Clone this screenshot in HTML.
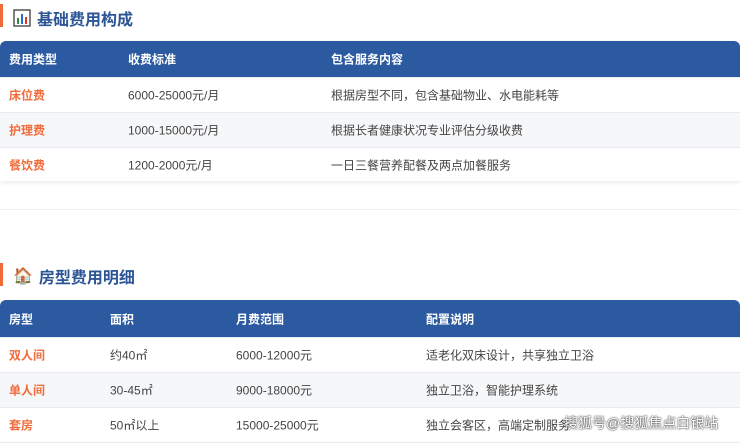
<!DOCTYPE html><html><head><meta charset="utf-8"><style>
*{margin:0;padding:0;box-sizing:border-box}
body{width:740px;height:438px;overflow:hidden;background:#fff;font-family:"Liberation Sans","Noto Sans CJK SC",sans-serif;position:relative}
.bar{position:absolute;left:0;width:3px;background:#f26b3a}
.title{position:absolute;left:13px;font-size:16px;font-weight:bold;color:#2c5596;display:flex;align-items:center;gap:6px}
.tbl{position:absolute;left:0;width:740px;border-radius:6px 6px 0 0;overflow:hidden;box-shadow:0 2px 4px rgba(0,0,0,0.08)}
.row{position:relative;height:35px;font-size:12px;color:#444;border-bottom:1px solid #e8ebf0}
.row span{position:absolute;top:50%;transform:translateY(-50%);white-space:nowrap}
.hd{background:#2c5aa0;color:#fff;font-weight:bold;height:37px}
.alt{background:#f6f7f9}
.o{color:#f26b3a;font-weight:bold}
</style></head><body>
<div class="bar" style="top:4px;height:23px"></div>
<div class="title" style="top:6px"><svg width="18" height="18" viewBox="0 0 18 18"><rect x="1" y="1" width="16" height="16" fill="#fff" stroke="#555" stroke-width="1.5"/><rect x="4" y="9" width="2" height="6" fill="#2b8a3e"/><rect x="8" y="5" width="2" height="10" fill="#1c6fd1"/><rect x="12" y="8" width="2" height="7" fill="#e03131"/></svg>基础费用构成</div>
<div class="tbl" style="top:41px">
<div class="row hd"><span style="left:9px">费用类型</span><span style="left:128px">收费标准</span><span style="left:331px">包含服务内容</span></div>
<div class="row"><span class="o" style="left:9px">床位费</span><span style="left:128px">6000-25000元/月</span><span style="left:331px">根据房型不同，包含基础物业、水电能耗等</span></div>
<div class="row alt"><span class="o" style="left:9px">护理费</span><span style="left:128px">1000-15000元/月</span><span style="left:331px">根据长者健康状况专业评估分级收费</span></div>
<div class="row" style="height:33px;border:none"><span class="o" style="left:9px">餐饮费</span><span style="left:128px">1200-2000元/月</span><span style="left:331px">一日三餐营养配餐及两点加餐服务</span></div>
</div>
<div style="position:absolute;top:209px;left:0;width:740px;height:1px;background:#f0f1f3"></div>
<div class="bar" style="top:263px;height:23px"></div>
<div class="title" style="top:264px"><span>🏠</span>房型费用明细</div>
<div class="tbl" style="top:300px">
<div class="row hd" style="height:38px"><span style="left:9px">房型</span><span style="left:110px">面积</span><span style="left:236px">月费范围</span><span style="left:426px">配置说明</span></div>
<div class="row"><span class="o" style="left:9px">双人间</span><span style="left:110px">约40㎡</span><span style="left:236px">6000-12000元</span><span style="left:426px">适老化双床设计，共享独立卫浴</span></div>
<div class="row alt"><span class="o" style="left:9px">单人间</span><span style="left:110px">30-45㎡</span><span style="left:236px">9000-18000元</span><span style="left:426px">独立卫浴，智能护理系统</span></div>
<div class="row"><span class="o" style="left:9px">套房</span><span style="left:110px">50㎡以上</span><span style="left:236px">15000-25000元</span><span style="left:426px">独立会客区，高端定制服务</span></div>
</div>
<div style="position:absolute;left:564px;top:413px;font-size:14px;white-space:nowrap;color:#fff;text-shadow:0 0 2px #333,0 0 1px #333">搜狐号@搜狐焦点白银站</div>
</body></html>
